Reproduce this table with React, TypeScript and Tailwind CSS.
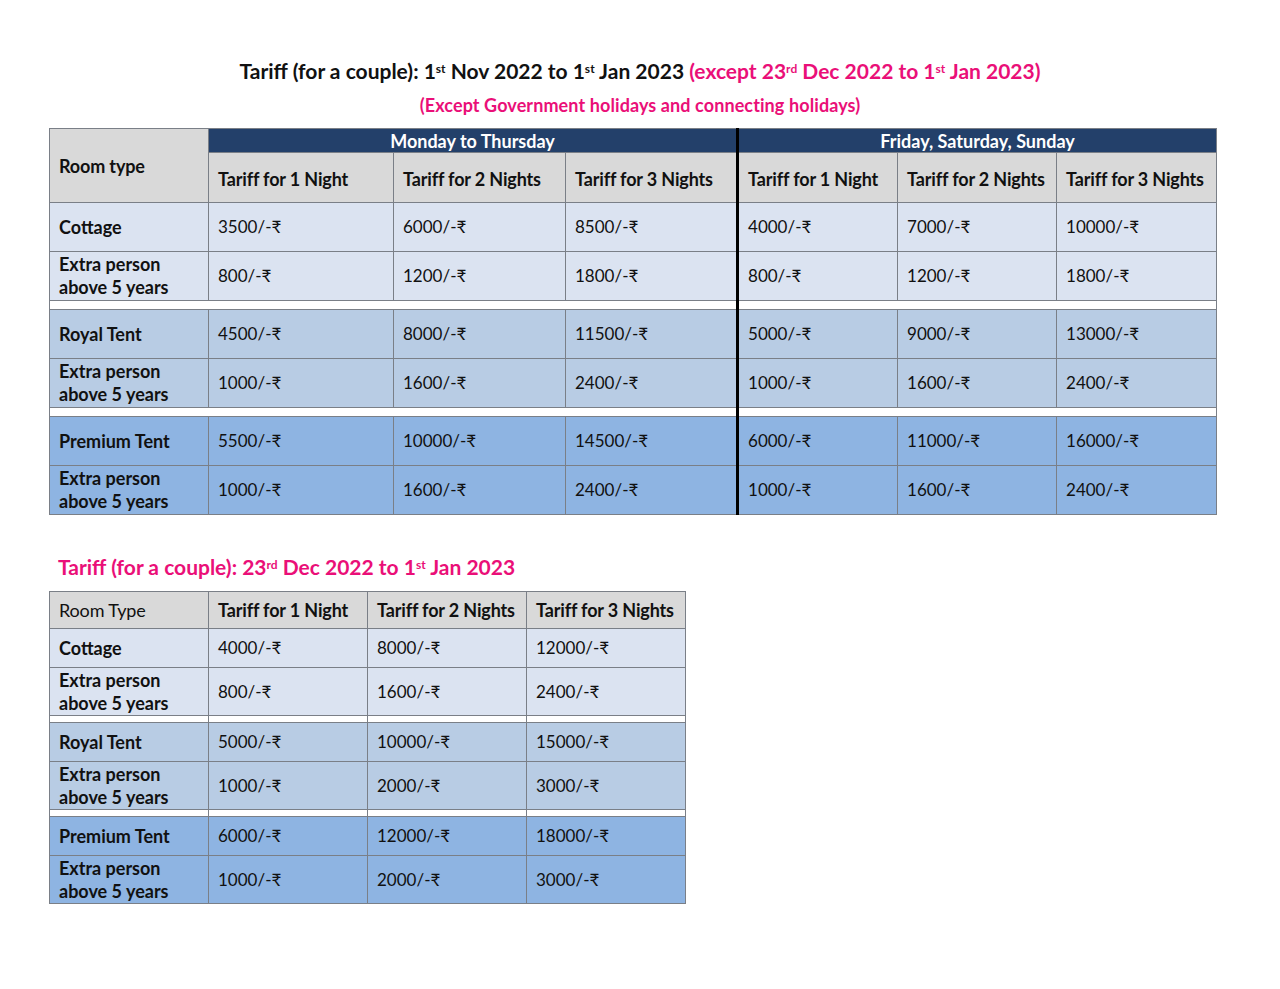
import React from "react";

const PINK = "text-[#ea0f78]";

type Row = { label: string[]; values: string[] };
type Group = { bg: string; rows: Row[] };

const weekGroups: Group[] = [
  {
    bg: "bg-[#dbe3f1]",
    rows: [
      { label: ["Cottage"], values: ["3500", "6000", "8500", "4000", "7000", "10000"] },
      { label: ["Extra person", "above 5 years"], values: ["800", "1200", "1800", "800", "1200", "1800"] },
    ],
  },
  {
    bg: "bg-[#b8cce4]",
    rows: [
      { label: ["Royal Tent"], values: ["4500", "8000", "11500", "5000", "9000", "13000"] },
      { label: ["Extra person", "above 5 years"], values: ["1000", "1600", "2400", "1000", "1600", "2400"] },
    ],
  },
  {
    bg: "bg-[#8eb4e2]",
    rows: [
      { label: ["Premium Tent"], values: ["5500", "10000", "14500", "6000", "11000", "16000"] },
      { label: ["Extra person", "above 5 years"], values: ["1000", "1600", "2400", "1000", "1600", "2400"] },
    ],
  },
];

const peakGroups: Group[] = [
  {
    bg: "bg-[#dbe3f1]",
    rows: [
      { label: ["Cottage"], values: ["4000", "8000", "12000"] },
      { label: ["Extra person", "above 5 years"], values: ["800", "1600", "2400"] },
    ],
  },
  {
    bg: "bg-[#b8cce4]",
    rows: [
      { label: ["Royal Tent"], values: ["5000", "10000", "15000"] },
      { label: ["Extra person", "above 5 years"], values: ["1000", "2000", "3000"] },
    ],
  },
  {
    bg: "bg-[#8eb4e2]",
    rows: [
      { label: ["Premium Tent"], values: ["6000", "12000", "18000"] },
      { label: ["Extra person", "above 5 years"], values: ["1000", "2000", "3000"] },
    ],
  },
];

const cell = "border border-[#7a7f87] px-[9px] align-middle text-left";
const head = "border border-[#7a7f87] pl-[9px] pr-[2px] align-middle text-left whitespace-nowrap text-[18px] tracking-[-0.15px]";

function Label({ lines }: { lines: string[] }) {
  return (
    <div className="text-[18px] font-bold leading-[23px]">
      {lines.map((l) => (
        <div key={l}>{l}</div>
      ))}
    </div>
  );
}

function Sup({ children }: { children: React.ReactNode }) {
  return <sup className="text-[12px]">{children}</sup>;
}

function WeekTable() {
  return (
    <table className="w-[1167px] table-fixed border-collapse text-[17px] leading-[22px] text-[#111]">
      <colgroup>
        <col className="w-[159px]" />
        <col className="w-[185px]" />
        <col className="w-[172px]" />
        <col className="w-[172px]" />
        <col className="w-[160px]" />
        <col className="w-[159px]" />
        <col className="w-[160px]" />
      </colgroup>
      <thead>
        <tr className="h-[24px]">
          <th rowSpan={2} className={`${head} bg-[#d9d9d9] font-bold`}>
            Room type
          </th>
          <th colSpan={3} className="border border-[#7a7f87] bg-[#23406a] p-0 text-center text-[18px] font-bold text-white">
            Monday to Thursday
          </th>
          <th colSpan={3} className="border border-[#7a7f87] border-l-[3px] border-l-black bg-[#23406a] p-0 text-center text-[18px] font-bold text-white">
            Friday, Saturday, Sunday
          </th>
        </tr>
        <tr className="h-[50px] bg-[#d9d9d9]">
          {["1 Night", "2 Nights", "3 Nights", "1 Night", "2 Nights", "3 Nights"].map((n, i) => (
            <th
              key={i}
              className={`${head} pt-[2px] font-bold ${i === 3 ? "border-l-[3px] border-l-black" : ""}`}
            >
              Tariff for {n}
            </th>
          ))}
        </tr>
      </thead>
      <tbody>
        {weekGroups.map((g, gi) => (
          <React.Fragment key={gi}>
            {gi > 0 && (
              <tr className="h-[9px] bg-white">
                <td colSpan={4} className="border border-[#7a7f87] p-0" />
                <td colSpan={3} className="border border-[#7a7f87] border-l-[3px] border-l-black p-0" />
              </tr>
            )}
            {g.rows.map((r, ri) => (
              <tr key={ri} className={`h-[49px] ${g.bg}`}>
                <td className={cell}>
                  <Label lines={r.label} />
                </td>
                {r.values.map((v, vi) => (
                  <td key={vi} className={`${cell} ${vi === 3 ? "border-l-[3px] border-l-black" : ""}`}>
                    {v}/-₹
                  </td>
                ))}
              </tr>
            ))}
          </React.Fragment>
        ))}
      </tbody>
    </table>
  );
}

function PeakTable() {
  return (
    <table className="w-[636px] table-fixed border-collapse text-[17px] leading-[22px] text-[#111]">
      <colgroup>
        <col className="w-[159px]" />
        <col className="w-[159px]" />
        <col className="w-[159px]" />
        <col className="w-[159px]" />
      </colgroup>
      <thead>
        <tr className="h-[37px] bg-[#d9d9d9]">
          <th className={`${head} font-normal`}>Room Type</th>
          {["1 Night", "2 Nights", "3 Nights"].map((n) => (
            <th key={n} className={`${head} font-bold`}>
              Tariff for {n}
            </th>
          ))}
        </tr>
      </thead>
      <tbody>
        {peakGroups.map((g, gi) => (
          <React.Fragment key={gi}>
            {gi > 0 && (
              <tr className="h-[7px] bg-white">
                {[0, 1, 2, 3].map((k) => (
                  <td key={k} className="border border-[#7a7f87] p-0" />
                ))}
              </tr>
            )}
            {g.rows.map((r, ri) => (
              <tr key={ri} className={`${ri === 0 ? "h-[39px]" : "h-[48px]"} ${g.bg}`}>
                <td className={cell}>
                  <Label lines={r.label} />
                </td>
                {r.values.map((v, vi) => (
                  <td key={vi} className={cell}>
                    {v}/-₹
                  </td>
                ))}
              </tr>
            ))}
          </React.Fragment>
        ))}
      </tbody>
    </table>
  );
}

export default function App() {
  return (
    <div
      className="min-h-[989px] w-[1280px] bg-white"
      style={{ fontFamily: "Lato, 'Noto Sans', sans-serif" }}
    >
      <div className="pt-[57px] text-center text-[21px] font-bold leading-[28px] text-[#111]">
        Tariff (for a couple): 1<Sup>st</Sup> Nov 2022 to 1<Sup>st</Sup> Jan 2023{" "}
        <span className={PINK}>
          (except 23<Sup>rd</Sup> Dec 2022 to 1<Sup>st</Sup> Jan 2023)
        </span>
      </div>
      <div className={`mt-[9px] text-center text-[18px] font-bold leading-[22px] tracking-[0.1px] ${PINK}`}>
        (Except Government holidays and connecting holidays)
      </div>
      <div className="mt-[12px] pl-[49px]">
        <WeekTable />
      </div>
      <div className={`mt-[38px] pl-[58px] text-[21px] font-bold leading-[28px] ${PINK}`}>
        Tariff (for a couple): 23<Sup>rd</Sup> Dec 2022 to 1<Sup>st</Sup> Jan 2023
      </div>
      <div className="mt-[10px] pl-[49px]">
        <PeakTable />
      </div>
    </div>
  );
}
